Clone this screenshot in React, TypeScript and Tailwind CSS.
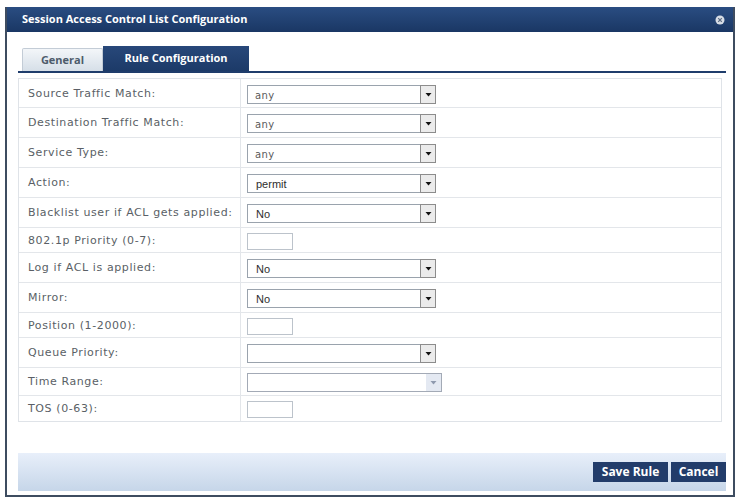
type Row =
  | { label: string; kind: "select"; value: string; h: number; tone?: "light" | "dark" }
  | { label: string; kind: "input"; h: number }
  | { label: string; kind: "range"; h: number };

const rows: Row[] = [
  { label: "Source Traffic Match:", kind: "select", value: "any", h: 29, tone: "light" },
  { label: "Destination Traffic Match:", kind: "select", value: "any", h: 30, tone: "light" },
  { label: "Service Type:", kind: "select", value: "any", h: 30, tone: "light" },
  { label: "Action:", kind: "select", value: "permit", h: 30, tone: "dark" },
  { label: "Blacklist user if ACL gets applied:", kind: "select", value: "No", h: 30, tone: "dark" },
  { label: "802.1p Priority (0-7):", kind: "input", h: 25 },
  { label: "Log if ACL is applied:", kind: "select", value: "No", h: 30, tone: "dark" },
  { label: "Mirror:", kind: "select", value: "No", h: 30, tone: "dark" },
  { label: "Position (1-2000):", kind: "input", h: 25 },
  { label: "Queue Priority:", kind: "select", value: "", h: 30 },
  { label: "Time Range:", kind: "range", h: 28 },
  { label: "TOS (0-63):", kind: "input", h: 25 },
];

function Arrow({ color = "#111" }: { color?: string }) {
  return (
    <svg width="7" height="5" viewBox="0 0 7 5">
      <path d="M0.5 1 L6.5 1 L3.5 4.5 Z" fill={color} />
    </svg>
  );
}

function SelectBox({ value, tone }: { value: string; tone?: "light" | "dark" }) {
  return (
    <div className="flex h-[19px] w-[189px] items-center border border-[#9aa3ad] bg-white">
      <span
        className={
          tone === "dark"
            ? "flex-1 pl-[8px] pt-[1px] font-['Liberation_Sans',sans-serif] text-[11px] text-[#2e2e2e]"
            : "flex-1 pl-[7px] pt-[2px] font-['DejaVu_Sans',sans-serif] text-[10px] tracking-[0.4px] text-[#5a5a5a]"
        }
      >
        {value}
      </span>
      <div className="mr-[-1px] flex h-[19px] w-[16px] items-center justify-center border border-[#8c8c8c] bg-[#ebebeb]">
        <Arrow />
      </div>
    </div>
  );
}

export default function App() {
  return (
    <div className="h-[504px] w-[740px] bg-white pl-[5px] pr-[5px] pt-[7px]">
      <div className="flex h-[490px] flex-col border-x-[2px] border-b-[2px] border-[#3e4c60] bg-white">
        <div className="flex h-[25px] shrink-0 items-center justify-between bg-gradient-to-b from-[#2a4d82] to-[#1a3764] pl-[15px] pr-[8px]">
          <span className="font-['Open_Sans',sans-serif] text-[11px] font-bold text-white">
            Session Access Control List Configuration
          </span>
          <svg width="10" height="10" viewBox="0 0 10 10">
            <circle cx="5" cy="5" r="4.5" fill="#d7dde6" />
            <path d="M3.2 3.2 L6.8 6.8 M6.8 3.2 L3.2 6.8" stroke="#5b6a80" strokeWidth="1.2" />
          </svg>
        </div>

        <div className="flex flex-1 flex-col pl-[11px] pr-[7px] pt-[14px]">
          <div className="flex items-end pl-[4px]">
            <div className="flex h-[23px] w-[81px] items-center justify-center rounded-t-[2px] border border-b-0 border-[#c3ccd6] bg-gradient-to-b from-[#f3f6f9] to-[#d6dfe8] font-['Open_Sans',sans-serif] text-[11px] font-bold text-[#4d5b6b]">
              General
            </div>
            <div className="flex h-[25px] w-[146px] items-center justify-center bg-gradient-to-b from-[#28487a] to-[#1c3a68] font-['Open_Sans',sans-serif] text-[11px] font-bold text-white">
              Rule Configuration
            </div>
          </div>
          <div className="h-[2px] bg-[#1f3d6c]" />

          <div className="mr-[4px] mt-[5px] border border-[#dfe3e8]">
            {rows.map((r, i) => (
              <div
                key={i}
                style={{ height: r.h }}
                className="flex border-b border-[#e3e6ea] last:border-b-0"
              >
                <div className="flex w-[222px] shrink-0 items-center border-r border-[#e3e6ea] pl-[9px] pt-[2px] font-['DejaVu_Sans',sans-serif] text-[11px] tracking-[0.6px] text-[#5a5f66]">
                  {r.label}
                </div>
                <div className="flex items-center pl-[6px] pt-[2px]">
                  {r.kind === "select" && <SelectBox value={r.value} tone={r.tone} />}
                  {r.kind === "input" && (
                    <div className="h-[17px] w-[46px] border border-[#bcc3cb] bg-white" />
                  )}
                  {r.kind === "range" && (
                    <div className="flex h-[19px] w-[195px] items-center justify-end border border-[#a3aab6] bg-white">
                      <div className="flex h-[17px] w-[15px] items-center justify-center bg-[#e4e9f2]">
                        <Arrow color="#8f9aae" />
                      </div>
                    </div>
                  )}
                </div>
              </div>
            ))}
          </div>

          <div className="mt-[31px] flex h-[38px] items-center justify-end gap-[3px] bg-gradient-to-b from-[#e8effa] to-[#c6d6e9]">
            <button
              type="button"
              className="flex h-[20px] w-[75px] items-center justify-center bg-[#223c6a] font-['Open_Sans',sans-serif] text-[12px] font-bold text-white"
            >
              Save Rule
            </button>
            <button
              type="button"
              className="flex h-[20px] w-[55px] items-center justify-center bg-[#223c6a] font-['Open_Sans',sans-serif] text-[12px] font-bold text-white"
            >
              Cancel
            </button>
          </div>
        </div>
      </div>
    </div>
  );
}
